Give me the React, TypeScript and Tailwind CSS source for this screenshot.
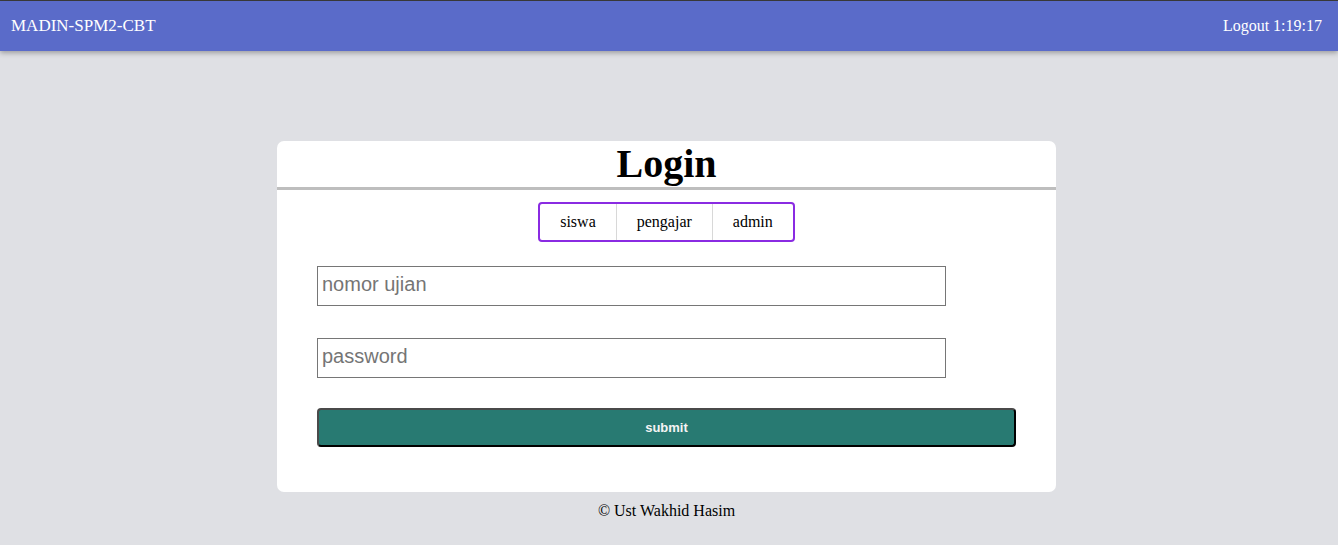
export default function App() {
  return (
    <div className="min-h-[545px] bg-[#dfe0e4] font-['Liberation_Serif',serif] text-black">
      <div className="h-px bg-[#3c3c3c]" />
      <header className="flex h-[50px] items-center justify-between bg-[#5a6bc9] px-[11px] text-[16px] text-white shadow-[0_2px_5px_rgba(0,0,0,0.3)]">
        <span className="text-[17px]">MADIN-SPM2-CBT</span>
        <span className="pr-[5px]">Logout 1:19:17</span>
      </header>

      <div className="pt-[90px] pr-[5px]">
        <div className="mx-auto w-[779px] rounded-[7px] bg-white pb-[45px]">
          <h1 className="border-b-[3px] border-[#bebebe] text-center text-[40px] font-bold leading-[46px]">
            Login
          </h1>

          <div className="mt-[12px] flex justify-center">
            <div className="flex h-[40px] rounded-[4px] border-2 border-[#8a2be2] text-[16px]">
              <button className="px-[20px]">siswa</button>
              <button className="border-l border-[#d8d8d8] px-[20px]">pengajar</button>
              <button className="border-l border-[#d8d8d8] px-[20px]">admin</button>
            </div>
          </div>

          <form className="mt-[24px] px-[40px]" onSubmit={(e) => e.preventDefault()}>
            <input
              type="text"
              placeholder="nomor ujian"
              className="block h-[40px] w-[629px] border border-[#767676] px-[4px] pb-[4px] font-['Liberation_Sans',sans-serif] text-[20px] placeholder:text-[#757575]"
            />
            <input
              type="password"
              placeholder="password"
              className="mt-[32px] block h-[40px] w-[629px] border border-[#767676] px-[4px] pb-[4px] font-['Liberation_Sans',sans-serif] text-[20px] placeholder:text-[#757575]"
            />
            <button
              type="submit"
              className="mt-[30px] block h-[39px] w-full rounded-[4px] border-2 border-t-[#4a4a4a] border-l-[#4a4a4a] border-r-black border-b-black bg-[#287a72] font-['Liberation_Sans',sans-serif] text-[13px] font-bold text-[#f4f4f4]"
            >
              submit
            </button>
          </form>
        </div>

        <p className="mt-[7px] text-center text-[16px]">© Ust Wakhid Hasim</p>
      </div>
    </div>
  );
}
